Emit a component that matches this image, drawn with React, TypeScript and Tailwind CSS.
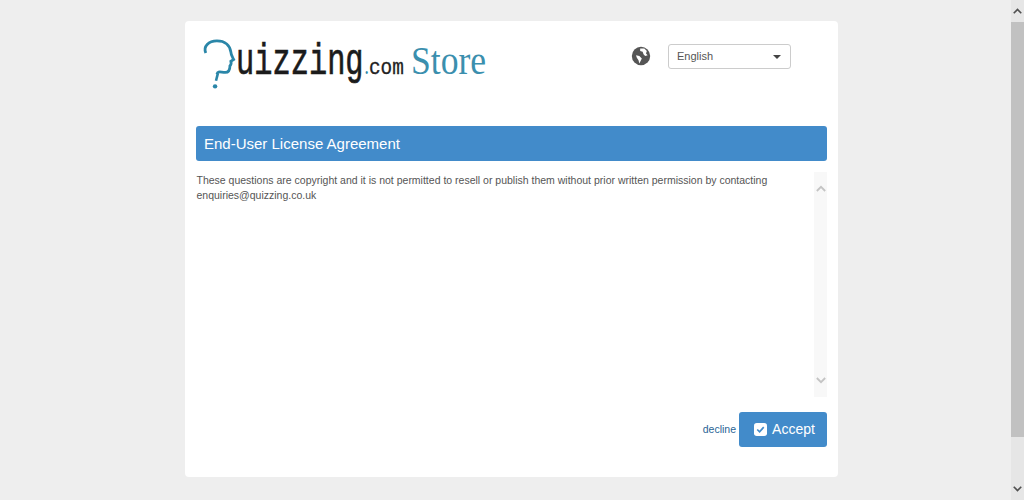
import React from "react";

const Chevron = ({ up, className }: { up?: boolean; className: string }) => (
  <svg viewBox="0 0 12 8" className={className} fill="none" stroke="currentColor" strokeWidth="2.2">
    <path d={up ? "M1 7L6 2L11 7" : "M1 1L6 6L11 1"} />
  </svg>
);

const Logo = () => (
  <div className="relative flex items-baseline h-[60px] w-[290px] pl-[33px] whitespace-nowrap">
    <svg viewBox="0 0 44 56" className="absolute left-[-1px] top-[6px] w-[41px] h-[52px]" fill="none" stroke="#2a86a8">
      <path strokeWidth="3" d="M4 15C1 8 7 2 16 2C25 2 30 7 31 14C31 17 33 20 34 22L31 24C32 27 31 28 30 29C30 32 29 36 25 36C20 36 17 34 16 38" />
      <path strokeWidth="2.8" d="M17 37L15 45" />
      <circle cx="14" cy="51" r="2.4" fill="#2a86a8" stroke="none" />
    </svg>
    <span className="text-[45px] leading-[60px] text-[#1b1b1b] [-webkit-text-stroke:0.7px_#1b1b1b] [font-family:'Liberation_Mono',monospace] scale-x-[0.675] origin-left inline-block w-[128px]">uizzing</span>
    <span className="text-[22px] leading-none text-[#2a86a8] [font-family:'DejaVu_Serif',serif] w-[5px] inline-block scale-x-[0.75] origin-left">.</span>
    <span className="text-[22px] leading-none text-[#222] [-webkit-text-stroke:0.3px_#222] [font-family:'Liberation_Mono',monospace] scale-x-[0.88] origin-left inline-block w-[35px]">com</span>
    <span className="ml-[7px] text-[40px] leading-none text-[#3b8fae] [font-family:'Liberation_Serif',serif] scale-x-[0.89] origin-left inline-block">Store</span>
  </div>
);

export default function App() {
  return (
    <div className="flex h-[500px] w-[1024px] overflow-hidden bg-[#eeeeee] font-['Liberation_Sans',Arial,sans-serif]">
      <main className="flex-1 flex justify-center pt-[21px] pl-[12px]">
        <div className="w-[653px] h-[456px] bg-white rounded-[4px] pl-[11px] pr-[11px] flex flex-col">
          <header className="h-[105px] flex items-start">
            <div className="pt-[12px] pl-[7px]"><Logo /></div>
            <div className="ml-[138px] mt-[23px] flex items-center">
              <svg viewBox="0 0 24 24" className="w-[20px] h-[20px] text-[#555] -mt-[2px]">
                <circle cx="12" cy="12" r="11" fill="currentColor" />
                <path fill="#fff" d="M11 3l5 0 3 3-1 3 2 2-3 1-2-2-1-3-3-1zM6 11l4 1 3 3-1 2-2 4-1-4-2-3z" />
              </svg>
              <div className="ml-[17px] w-[123px] h-[25px] border border-[#cccccc] rounded-[3px] bg-white flex items-center justify-between pl-[8px] pr-[9px] text-[11px] text-[#555]">
                <span>English</span>
                <span className="w-0 h-0 border-l-[4px] border-r-[4px] border-t-[4px] border-l-transparent border-r-transparent border-t-[#444]" />
              </div>
            </div>
          </header>
          <h1 className="h-[35px] bg-[#428bca] rounded-[3px] flex items-center px-[8px] pt-[1px] text-[#fff] text-[15px]">End-User License Agreement</h1>
          <section className="flex mt-[11px] h-[225px]">
            <p className="flex-1 pr-[40px] pl-[0.5px] pt-[1px] text-[10.5px] leading-[15px] text-[#555]">
              These questions are copyright and it is not permitted to resell or publish them without prior written permission by contacting enquiries@quizzing.co.uk
            </p>
            <div className="w-[13px] bg-[#f8f8f8] flex flex-col items-center justify-between py-[13px] text-[#c4c4c4]">
              <Chevron up className="w-[10px] h-[7px]" />
              <Chevron className="w-[10px] h-[7px]" />
            </div>
          </section>
          <footer className="flex justify-end items-center gap-[3px] mt-[15px]">
            <a className="text-[10.5px] text-[#2a6496]">decline</a>
            <button className="w-[88px] h-[35px] bg-[#428bca] rounded-[3px] flex items-center justify-center gap-[5px] pl-[3px] text-white text-[14px]">
              <svg viewBox="0 0 14 14" className="w-[13px] h-[13px]">
                <rect width="14" height="14" rx="3" fill="#fff" />
                <path d="M3.5 7L6 9.5L10.5 4.5" fill="none" stroke="#428bca" strokeWidth="1.8" />
              </svg>
              Accept
            </button>
          </footer>
        </div>
      </main>
      <aside className="relative w-[13px] h-full bg-[#e6e6e6] flex flex-col justify-between text-[#505050]">
        <div className="h-[22px] flex items-center justify-center"><Chevron up className="w-[9px] h-[6px]" /></div>
        <div className="absolute top-[22px] right-0 w-[13px] h-[415px] bg-[#c1c1c1]" />
        <div className="h-[22px] flex items-center justify-center"><Chevron className="w-[9px] h-[6px]" /></div>
      </aside>
    </div>
  );
}
